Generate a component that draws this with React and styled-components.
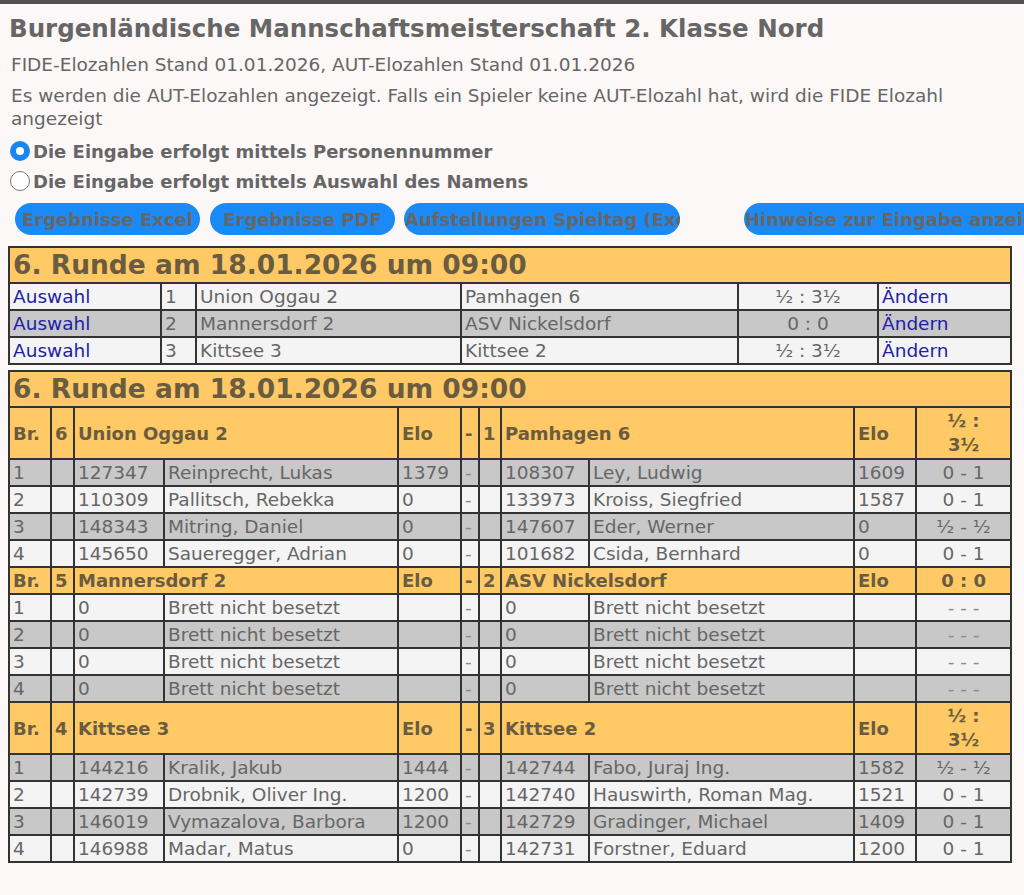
import styled, { createGlobalStyle } from "styled-components"

const GlobalStyle = createGlobalStyle`
  html, body {
    margin: 0;
    padding: 0;
    background: #fcf8f8;
    overflow-x: hidden;
  }
  body {
    font-family: "DejaVu Sans", Verdana, sans-serif;
    color: #666;
    border-top: 4px solid #505050;
  }
`;

const Page = styled.div`
  padding: 10px 8px 30px 8px;
  display: flex;
  flex-direction: column;
  width: 1002px;
`;

const Title = styled.h1`
  margin: 0 0 0 1px;
  font-size: 24.5px;
  line-height: 29px;
  font-weight: 700;
  color: #666;
  white-space: nowrap;
`;

const Info = styled.p`
  margin: ${(p) => p.$top}px 0 0 3px;
  font-size: 18.5px;
  line-height: 23px;
  color: #666;
`;

const RadioGroup = styled.div`
  margin-top: 6px;
  display: flex;
  flex-direction: column;
`;

const RadioLabel = styled.label`
  display: flex;
  align-items: center;
  height: 30px;
  font-size: 18px;
  font-weight: 700;
  color: #666;
  margin-left: 2px;
`;

const Radio = styled.input`
  appearance: none;
  margin: 0 3px 0 0;
  width: 20px;
  height: 20px;
  border-radius: 50%;
  box-sizing: border-box;
  border: 1.5px solid #777;
  background: #fff;

  &:checked {
    border: 6px solid #1a86f2;
    background: #fff;
  }
`;

const ButtonBar = styled.div`
  margin-top: 7px;
  display: flex;
  padding-left: 7px;
  width: 1100px;
`;

const PillButton = styled.button`
  width: ${(p) => p.$w}px;
  margin-right: ${(p) => p.$gap}px;
  height: 32px;
  border: none;
  border-radius: 16px;
  background: #1a8bf6;
  color: #666;
  font-family: inherit;
  font-size: 18px;
  font-weight: 700;
  padding: 0 1px;
  white-space: nowrap;
  overflow: hidden;
  text-align: ${(p) => (p.$left ? "left" : "center")};
  flex-shrink: 0;
`;

const Table = styled.table`
  margin-top: ${(p) => p.$top}px;
  width: 1002px;
  table-layout: fixed;
  border-collapse: collapse;
  border: 2px solid #333;
  font-size: 18.5px;
`;

const TitleCell = styled.td`
  background: #ffc965;
  border: 2px solid #333;
  font-size: 26.5px;
  font-weight: 700;
  line-height: 32px;
  padding: 1px 3px 1px 3px;
  color: #6a5c40;
  white-space: nowrap;
`;

const HeadCell = styled.td`
  background: #ffc965;
  border: 2px solid #333;
  font-size: 18px;
  font-weight: 700;
  line-height: 23px;
  padding: 1px 3px;
  color: #6a5c40;
  text-align: ${(p) => (p.$center ? "center" : "left")};
  white-space: nowrap;
`;

const ScoreLine = styled.div`
  line-height: ${(p) => (p.$stacked ? 24 : 23)}px;
`;

const Cell = styled.td`
  background: ${(p) => (p.$gray ? "#c8c8c8" : "#f4f4f4")};
  border: 2px solid #333;
  line-height: 21px;
  padding: 2px 3px;
  color: ${(p) => (p.$muted ? "#8a8a8a" : "#666")};
  text-align: ${(p) => (p.$center ? "center" : "left")};
  white-space: nowrap;
  overflow: hidden;
`;

const Link = styled.a`
  color: #1e1ea8;
  text-decoration: none;
`;

const matches = [
  { no: 1, home: "Union Oggau 2", away: "Pamhagen 6", score: "½ : 3½" },
  { no: 2, home: "Mannersdorf 2", away: "ASV Nickelsdorf", score: "0 : 0" },
  { no: 3, home: "Kittsee 3", away: "Kittsee 2", score: "½ : 3½" },
];

const empty = { id: "0", name: "Brett nicht besetzt", elo: "" };

const details = [
  {
    hn: 6, home: "Union Oggau 2", an: 1, away: "Pamhagen 6", score: ["½ :", "3½"], startGray: true,
    boards: [
      [{ id: "127347", name: "Reinprecht, Lukas", elo: "1379" }, { id: "108307", name: "Ley, Ludwig", elo: "1609" }, "0 - 1"],
      [{ id: "110309", name: "Pallitsch, Rebekka", elo: "0" }, { id: "133973", name: "Kroiss, Siegfried", elo: "1587" }, "0 - 1"],
      [{ id: "148343", name: "Mitring, Daniel", elo: "0" }, { id: "147607", name: "Eder, Werner", elo: "0" }, "½ - ½"],
      [{ id: "145650", name: "Saueregger, Adrian", elo: "0" }, { id: "101682", name: "Csida, Bernhard", elo: "0" }, "0 - 1"],
    ],
  },
  {
    hn: 5, home: "Mannersdorf 2", an: 2, away: "ASV Nickelsdorf", score: ["0 : 0"], startGray: false,
    boards: [
      [empty, empty, "- - -"],
      [empty, empty, "- - -"],
      [empty, empty, "- - -"],
      [empty, empty, "- - -"],
    ],
  },
  {
    hn: 4, home: "Kittsee 3", an: 3, away: "Kittsee 2", score: ["½ :", "3½"], startGray: true,
    boards: [
      [{ id: "144216", name: "Kralik, Jakub", elo: "1444" }, { id: "142744", name: "Fabo, Juraj Ing.", elo: "1582" }, "½ - ½"],
      [{ id: "142739", name: "Drobnik, Oliver Ing.", elo: "1200" }, { id: "142740", name: "Hauswirth, Roman Mag.", elo: "1521" }, "0 - 1"],
      [{ id: "146019", name: "Vymazalova, Barbora", elo: "1200" }, { id: "142729", name: "Gradinger, Michael", elo: "1409" }, "0 - 1"],
      [{ id: "146988", name: "Madar, Matus", elo: "0" }, { id: "142731", name: "Forstner, Eduard", elo: "1200" }, "0 - 1"],
    ],
  },
];

const RoundTitle = "6. Runde am 18.01.2026 um 09:00";

const Overview = () => (
  <Table $top={11}>
    <colgroup>
      <col style={{ width: 152 }} />
      <col style={{ width: 35 }} />
      <col style={{ width: 265 }} />
      <col style={{ width: 277 }} />
      <col style={{ width: 140 }} />
      <col style={{ width: 133 }} />
    </colgroup>
    <tbody>
      <tr>
        <TitleCell colSpan={6}>{RoundTitle}</TitleCell>
      </tr>
      {matches.map((m, i) => (
        <tr key={m.no}>
          <Cell $gray={i === 1}><Link href="#">Auswahl</Link></Cell>
          <Cell $gray={i === 1}>{m.no}</Cell>
          <Cell $gray={i === 1}>{m.home}</Cell>
          <Cell $gray={i === 1}>{m.away}</Cell>
          <Cell $gray={i === 1} $center>{m.score}</Cell>
          <Cell $gray={i === 1}><Link href="#">Ändern</Link></Cell>
        </tr>
      ))}
    </tbody>
  </Table>
);

const Detail = () => (
  <Table $top={5}>
    <colgroup>
      {[42, 23, 90, 234, 63, 18, 22, 88, 265, 62, 95].map((w, i) => (
        <col key={i} style={{ width: w }} />
      ))}
    </colgroup>
    <tbody>
      <tr>
        <TitleCell colSpan={11}>{RoundTitle}</TitleCell>
      </tr>
      {details.map((d) => [
        <tr key={d.home}>
          <HeadCell>Br.</HeadCell>
          <HeadCell>{d.hn}</HeadCell>
          <HeadCell colSpan={2}>{d.home}</HeadCell>
          <HeadCell>Elo</HeadCell>
          <HeadCell>-</HeadCell>
          <HeadCell>{d.an}</HeadCell>
          <HeadCell colSpan={2}>{d.away}</HeadCell>
          <HeadCell>Elo</HeadCell>
          <HeadCell $center>
            {d.score.map((s, k) => (
              <ScoreLine key={k} $stacked={d.score.length > 1}>{s}</ScoreLine>
            ))}
          </HeadCell>
        </tr>,
        ...d.boards.map(([h, a, res], i) => {
          const gray = d.startGray ? i % 2 === 0 : i % 2 === 1;
          return (
            <tr key={d.home + i}>
              <Cell $gray={gray}>{i + 1}</Cell>
              <Cell $gray={gray}></Cell>
              <Cell $gray={gray}>{h.id}</Cell>
              <Cell $gray={gray}>{h.name}</Cell>
              <Cell $gray={gray}>{h.elo}</Cell>
              <Cell $gray={gray} $muted>-</Cell>
              <Cell $gray={gray}></Cell>
              <Cell $gray={gray}>{a.id}</Cell>
              <Cell $gray={gray}>{a.name}</Cell>
              <Cell $gray={gray}>{a.elo}</Cell>
              <Cell $gray={gray} $center $muted={res === "- - -"}>{res}</Cell>
            </tr>
          );
        }),
      ])}
    </tbody>
  </Table>
);

const App = () => {
  return (
    <>
      <GlobalStyle />
      <Page>
        <Title>Burgenländische Mannschaftsmeisterschaft 2. Klasse Nord</Title>
        <Info $top={10}>FIDE-Elozahlen Stand 01.01.2026, AUT-Elozahlen Stand 01.01.2026</Info>
        <Info $top={8}>
          Es werden die AUT-Elozahlen angezeigt. Falls ein Spieler keine AUT-Elozahl hat, wird die FIDE Elozahl angezeigt
        </Info>
        <RadioGroup>
          <RadioLabel>
            <Radio type="radio" name="mode" defaultChecked />
            Die Eingabe erfolgt mittels Personennummer
          </RadioLabel>
          <RadioLabel>
            <Radio type="radio" name="mode" />
            Die Eingabe erfolgt mittels Auswahl des Namens
          </RadioLabel>
        </RadioGroup>
        <ButtonBar>
          <PillButton $w={185} $gap={10}>Ergebnisse Excel</PillButton>
          <PillButton $w={185} $gap={9}>Ergebnisse PDF</PillButton>
          <PillButton $w={276} $gap={64} $left>Aufstellungen Spieltag (Excel)</PillButton>
          <PillButton $w={300} $gap={0} $left>Hinweise zur Eingabe anzeigen</PillButton>
        </ButtonBar>
        <Overview />
        <Detail />
      </Page>
    </>
  )
}

export default App
